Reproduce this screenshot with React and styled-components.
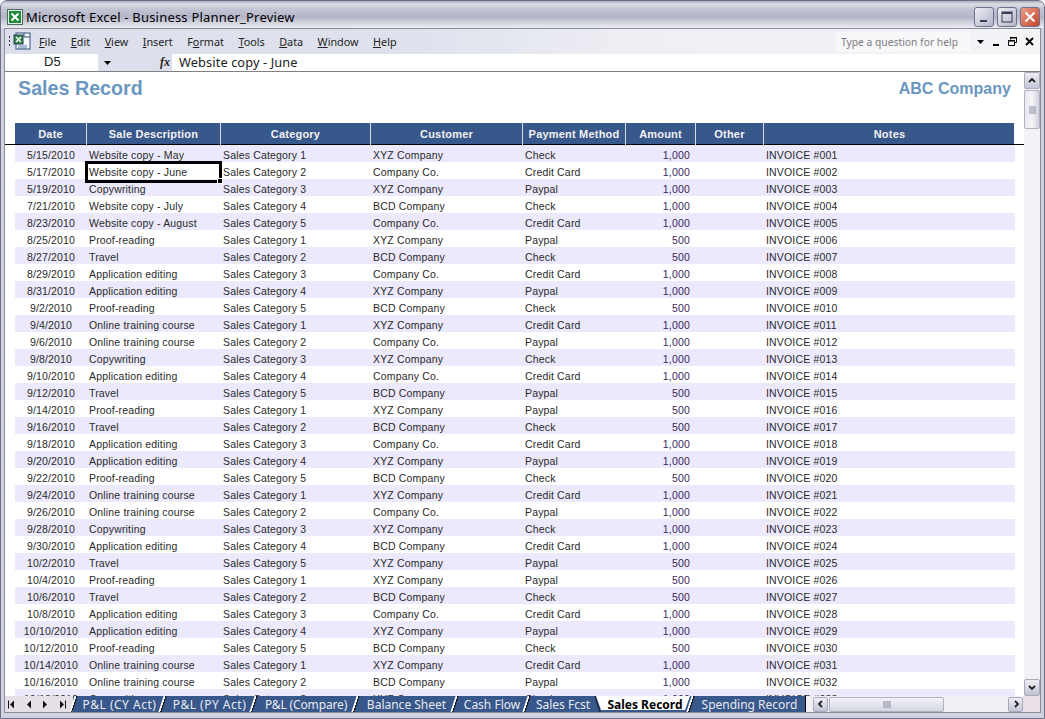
import React from "react";
import styled, { createGlobalStyle } from "styled-components";

const GlobalStyle = createGlobalStyle`
  html, body {
    margin: 0;
    padding: 0;
    background: #fff;
  }
  #root {
    width: 1045px;
    height: 719px;
  }
`;

const COLUMNS = "72px 134px 150px 152px 103px 70px 68px 251px";

const Window = styled.div`
  width: 1045px;
  height: 719px;
  box-sizing: border-box;
  display: flex;
  flex-direction: column;
  overflow: hidden;
  background: #d2d3e0;
  border: 1px solid #6f7088;
  border-radius: 7px 7px 0 0;
  font-family: "Liberation Sans", Arial, sans-serif;
`;

const TitleBar = styled.div`
  height: 27px;
  flex: none;
  box-sizing: border-box;
  display: flex;
  align-items: center;
  gap: 3px;
  padding: 4px 4px 0 6px;
  background: linear-gradient(#a9aabc 0, #dcdde6 3px, #c4c5d4 8px, #b3b4c7 16px, #d3d4df 22px, #ecedf2 100%);
`;

const AppTitle = styled.div`
  flex: 1;
  font-family: "Noto Sans", sans-serif;
  font-size: 13px;
  color: #000;
  white-space: nowrap;
  letter-spacing: 0.2px;
`;

const WinButton = styled.div`
  width: 20px;
  height: 20px;
  box-sizing: border-box;
  display: flex;
  align-items: center;
  justify-content: center;
  border: 1px solid #70728c;
  border-radius: 3px;
  background: ${({ $close }) =>
    $close
      ? "linear-gradient(135deg, #e8a08c, #c8432c)"
      : "linear-gradient(135deg, #eeeef4, #b4b5c8)"};
`;

const Inner = styled.div`
  flex: 1;
  min-height: 0;
  display: flex;
  flex-direction: column;
  margin: 0 3px 5px 3px;
  border: 1px solid #8c8d9c;
  background: #fff;
`;

const MenuRow = styled.div`
  height: 25px;
  flex: none;
  display: flex;
  align-items: center;
  background: linear-gradient(90deg, #dde0ec 0, #dfe2ed 40%, #eeeef4 60%, #f4f4f7 100%);
`;

const ExcelDoc = styled.div`
  width: 29px;
  flex: none;
  display: flex;
  padding-left: 3px;
`;

const MenuItems = styled.div`
  display: flex;
  flex: 1;
  gap: 14.5px;
  padding-left: 2px;
  font-family: "Noto Sans", sans-serif;
  font-size: 10.8px;
  color: #222;
`;

const MenuItem = styled.span`
  u {
    text-underline-offset: 1px;
  }
`;

const HelpBox = styled.div`
  width: 135px;
  height: 20px;
  display: flex;
  align-items: center;
  padding-left: 5px;
  box-sizing: border-box;
  background: #f8f8fa;
  font-family: "Noto Sans", sans-serif;
  font-size: 10.3px;
  color: #7c7c84;
`;

const DocControls = styled.div`
  display: flex;
  align-items: center;
  gap: 8px;
  padding: 0 6px 0 6px;
`;

const FormulaRow = styled.div`
  height: 17px;
  flex: none;
  display: flex;
  align-items: stretch;
  font-size: 13px;
  color: #222;
  border-bottom: 1px solid #808080;
`;

const NameBox = styled.div`
  width: 93px;
  flex: none;
  padding-left: 39px;
  box-sizing: border-box;
  background: #fff;
`;

const FxArea = styled.div`
  width: 74px;
  flex: none;
  display: flex;
  align-items: center;
  justify-content: space-between;
  padding: 0 2px 0 6px;
  box-sizing: border-box;
  background: #dde0ec;
`;

const FxLabel = styled.span`
  font-family: "Liberation Serif", serif;
  font-style: italic;
  font-weight: bold;
  font-size: 12px;
  color: #222;
`;

const FormulaText = styled.div`
  flex: 1;
  padding-left: 7px;
  font-family: "Noto Sans", sans-serif;
  font-size: 12.8px;
  line-height: 17px;
  letter-spacing: 0.1px;
`;

const SheetArea = styled.div`
  flex: 1;
  min-height: 0;
  display: flex;
`;

const Sheet = styled.div`
  flex: 1;
  min-width: 0;
  overflow: hidden;
  background: #fff;
`;

const Heading = styled.div`
  height: 47px;
  box-sizing: content-box;
  display: flex;
  justify-content: space-between;
  padding: 4px 13px 0 13px;
  font-weight: bold;
  color: #6b97c0;
`;

const SheetTitle = styled.div`
  font-size: 19.7px;
  line-height: 24px;
`;

const Company = styled.div`
  font-size: 16px;
  line-height: 26px;
  letter-spacing: 0.03px;
`;

const HeaderRow = styled.div`
  display: grid;
  grid-template-columns: ${COLUMNS};
  margin-left: 10px;
  width: 999px;
  height: 21px;
  background: #38578a;
`;

const HeaderCell = styled.div`
  font-size: 11px;
  font-weight: bold;
  line-height: 22px;
  text-align: center;
  color: #f2f2f2;
  letter-spacing: 0.2px;
  border-right: 1px solid #d8dde8;
  white-space: nowrap;
  &:last-child {
    border-right: 0;
  }
`;

const HeaderRule = styled.div`
  height: 1px;
  background: #000;
`;

const Row = styled.div`
  display: grid;
  grid-template-columns: ${COLUMNS};
  margin-left: 10px;
  width: 1000px;
  height: 17px;
  background: ${({ $shaded }) => ($shaded ? "#ebe9fb" : "#fff")};
`;

const Cell = styled.div`
  position: relative;
  box-sizing: border-box;
  padding: 0 6px 0 2px;
  font-size: 10.5px;
  line-height: 20px;
  letter-spacing: 0.17px;
  color: #2a2a2a;
  white-space: nowrap;
`;

const DateCell = styled(Cell)`
  padding: 0;
  text-align: center;
`;

const AmountCell = styled(Cell)`
  text-align: right;
  color: #3d1f5e;
`;

const Selection = styled.div`
  position: absolute;
  left: -2px;
  top: -1px;
  right: -1px;
  bottom: -1px;
  border: 3px solid #000;
  pointer-events: none;
`;

const FillHandle = styled.div`
  position: absolute;
  right: -4px;
  bottom: -4px;
  width: 6px;
  height: 6px;
  background: #000;
  border: 1px solid #fff;
  box-sizing: border-box;
`;

const VScroll = styled.div`
  width: 16px;
  flex: none;
  display: flex;
  flex-direction: column;
  background: #f3f3f7;
`;

const ScrollButton = styled.div`
  flex: none;
  width: ${({ $w }) => $w || 16}px;
  height: ${({ $h }) => $h || 16}px;
  box-sizing: border-box;
  display: flex;
  align-items: center;
  justify-content: center;
  border: 1px solid #a8a9bb;
  border-radius: 2px;
  background: linear-gradient(#eeeef4, #c4c5d4);
`;

const VThumb = styled.div`
  flex: none;
  height: 39px;
  margin-top: 1px;
  box-sizing: border-box;
  display: flex;
  align-items: center;
  justify-content: center;
  border: 1px solid #b0b1c2;
  border-radius: 2px;
  background: linear-gradient(90deg, #e8e8ef, #f4f4f8, #cfd0dc);
`;

const Spacer = styled.div`
  flex: 1;
`;

const BottomBar = styled.div`
  height: 16px;
  flex: none;
  display: flex;
  align-items: stretch;
  background: #38578a;
`;

const TabNav = styled.div`
  width: 68px;
  flex: none;
  display: flex;
  align-items: center;
  gap: 8.5px;
  padding-left: 3px;
  box-sizing: border-box;
  background: #e6e0e6;
`;

const Tabs = styled.div`
  display: flex;
  align-items: stretch;
  flex: none;
`;

const Tab = styled.div`
  position: relative;
  isolation: isolate;
  display: flex;
  align-items: center;
  justify-content: center;
  padding-left: 4px;
  box-sizing: border-box;
  font-family: "Noto Sans", sans-serif;
  font-size: 12px;
  font-weight: 400;
  letter-spacing: ${({ $spacing }) => $spacing || 0}px;
  color: #e8eaf2;
  width: ${({ $w }) => $w}px;
  white-space: nowrap;

  &::before {
    content: "";
    position: absolute;
    left: -1px;
    top: 0;
    bottom: 0;
    width: 3px;
    background: linear-gradient(90deg, #fff 60%, #111 60%);
    transform: skewX(-18deg);
  }
`;

const ActiveTab = styled(Tab)`
  font-weight: 700;
  color: #000;

  &::before {
    left: 1px;
    width: 1px;
    background: #111;
    transform: skewX(18deg);
  }

  &::after {
    content: "";
    position: absolute;
    inset: 0 0 2px 0;
    z-index: -1;
    background: #fff;
    clip-path: polygon(0 0, 100% 0, calc(100% - 5px) 100%, 5px 100%);
  }
`;

const HScroll = styled.div`
  flex: 1;
  display: flex;
  align-items: center;
  padding-left: 7px;
  background: #f0f0f5;
  border-left: 1px solid #000;
`;

const HThumb = styled.div`
  width: 115px;
  height: 15px;
  margin-left: 1px;
  display: flex;
  align-items: center;
  justify-content: center;
  box-sizing: border-box;
  border: 1px solid #b0b1c2;
  border-radius: 2px;
  background: linear-gradient(#f4f4f8, #d4d5e0);
`;

const ScrollCorner = styled.div`
  width: 17px;
  height: 100%;
  flex: none;
  background: #e8dfe8;
`;

const GripLines = styled.svg`
  display: block;
`;

const ExcelIcon = () => (
  <svg width="16" height="16" viewBox="0 0 16 16">
    <rect x="0.5" y="0.5" width="15" height="15" fill="#e8f2e6" stroke="#4a6a5c" />
    <rect x="2" y="2" width="12" height="12" fill="#1f8a3c" />
    <path d="M4.5 4.5 L11.5 11.5 M11.5 4.5 L4.5 11.5" stroke="#fff" strokeWidth="2" />
  </svg>
);

const MenuDocIcon = () => (
  <svg width="24" height="20" viewBox="0 0 24 20">
    <path d="M1 4h1v2H1zM1 8h1v2H1zM1 12h1v2H1z" fill="#333" />
    <rect x="8" y="1" width="14" height="16" fill="#f4f6fb" stroke="#30507a" />
    <path d="M16 1v4h6" fill="none" stroke="#30507a" />
    <rect x="6" y="3" width="9" height="9" fill="#2c8a40" stroke="#2a3a60" />
    <path d="M8 5l5 5M13 5l-5 5" stroke="#fff" strokeWidth="1.4" />
    <path d="M10 14h9M10 16h9" stroke="#5a82b4" />
  </svg>
);

const Caret = () => (
  <svg width="7" height="4" viewBox="0 0 7 4">
    <path d="M0 0h7L3.5 4z" fill="#000" />
  </svg>
);

const Chevron = ({ dir }) => {
  const paths = {
    up: "M1 5l3-3 3 3",
    down: "M1 2l3 3 3-3",
    left: "M5 1L2 4l3 3",
    right: "M3 1l3 3-3 3",
  };
  return (
    <svg width="8" height="8" viewBox="0 0 8 8">
      <path d={paths[dir]} fill="none" stroke="#222" strokeWidth="1.8" />
    </svg>
  );
};

const NavArrow = ({ dir, bar }) => (
  <svg width="8" height="9" viewBox="0 0 8 9">
    {dir === "left" ? <path d="M6 0.5v8L2 4.5z" fill="#111" /> : <path d="M2 0.5v8l4-4z" fill="#111" />}
    {bar && <rect x={dir === "left" ? 0 : 7} y="0.5" width="1" height="8" fill="#111" />}
  </svg>
);

const rows = [
  ["5/15/2010", "Website copy - May", 1, "XYZ Company", "Check", "1,000"],
  ["5/17/2010", "Website copy - June", 2, "Company Co.", "Credit Card", "1,000"],
  ["5/19/2010", "Copywriting", 3, "XYZ Company", "Paypal", "1,000"],
  ["7/21/2010", "Website copy - July", 4, "BCD Company", "Check", "1,000"],
  ["8/23/2010", "Website copy - August", 5, "Company Co.", "Credit Card", "1,000"],
  ["8/25/2010", "Proof-reading", 1, "XYZ Company", "Paypal", "500"],
  ["8/27/2010", "Travel", 2, "BCD Company", "Check", "500"],
  ["8/29/2010", "Application editing", 3, "Company Co.", "Credit Card", "1,000"],
  ["8/31/2010", "Application editing", 4, "XYZ Company", "Paypal", "1,000"],
  ["9/2/2010", "Proof-reading", 5, "BCD Company", "Check", "500"],
  ["9/4/2010", "Online training course", 1, "XYZ Company", "Credit Card", "1,000"],
  ["9/6/2010", "Online training course", 2, "Company Co.", "Paypal", "1,000"],
  ["9/8/2010", "Copywriting", 3, "XYZ Company", "Check", "1,000"],
  ["9/10/2010", "Application editing", 4, "Company Co.", "Credit Card", "1,000"],
  ["9/12/2010", "Travel", 5, "BCD Company", "Paypal", "500"],
  ["9/14/2010", "Proof-reading", 1, "XYZ Company", "Paypal", "500"],
  ["9/16/2010", "Travel", 2, "BCD Company", "Check", "500"],
  ["9/18/2010", "Application editing", 3, "Company Co.", "Credit Card", "1,000"],
  ["9/20/2010", "Application editing", 4, "XYZ Company", "Paypal", "1,000"],
  ["9/22/2010", "Proof-reading", 5, "BCD Company", "Check", "500"],
  ["9/24/2010", "Online training course", 1, "XYZ Company", "Credit Card", "1,000"],
  ["9/26/2010", "Online training course", 2, "Company Co.", "Paypal", "1,000"],
  ["9/28/2010", "Copywriting", 3, "XYZ Company", "Check", "1,000"],
  ["9/30/2010", "Application editing", 4, "BCD Company", "Credit Card", "1,000"],
  ["10/2/2010", "Travel", 5, "XYZ Company", "Paypal", "500"],
  ["10/4/2010", "Proof-reading", 1, "XYZ Company", "Paypal", "500"],
  ["10/6/2010", "Travel", 2, "BCD Company", "Check", "500"],
  ["10/8/2010", "Application editing", 3, "Company Co.", "Credit Card", "1,000"],
  ["10/10/2010", "Application editing", 4, "XYZ Company", "Paypal", "1,000"],
  ["10/12/2010", "Proof-reading", 5, "BCD Company", "Check", "500"],
  ["10/14/2010", "Online training course", 1, "XYZ Company", "Credit Card", "1,000"],
  ["10/16/2010", "Online training course", 2, "BCD Company", "Paypal", "1,000"],
  ["10/18/2010", "Copywriting", 3, "XYZ Company", "Check", "1,000"],
];

const headers = ["Date", "Sale Description", "Category", "Customer", "Payment Method", "Amount", "Other", "Notes"];

const menus = [
  ["F", "ile"],
  ["E", "dit"],
  ["V", "iew"],
  ["I", "nsert"],
  ["Fo", "rmat", 1],
  ["T", "ools"],
  ["D", "ata"],
  ["W", "indow"],
  ["H", "elp"],
];

const tabs = [
  ["P&L (CY Act)", 89, 0.5],
  ["P&L (PY Act)", 91, 0.5],
  ["P&L (Compare)", 102, -0.15],
  ["Balance Sheet", 99],
  ["Cash Flow", 72],
  ["Sales Fcst", 70],
  ["Sales Record", 94],
  ["Spending Record", 115],
];

const App = () => (
  <>
    <GlobalStyle />
    <Window>
      <TitleBar>
        <ExcelIcon />
        <AppTitle>Microsoft Excel - Business Planner_Preview</AppTitle>
        <WinButton>
          <svg width="10" height="12" viewBox="0 0 10 12"><rect x="1" y="9" width="7" height="2" fill="#3a3c58" /></svg>
        </WinButton>
        <WinButton>
          <svg width="12" height="12" viewBox="0 0 12 12"><rect x="1" y="1" width="10" height="10" fill="none" stroke="#3a3c58" /><rect x="1" y="1" width="10" height="2" fill="#3a3c58" /></svg>
        </WinButton>
        <WinButton $close>
          <svg width="12" height="12" viewBox="0 0 12 12"><path d="M1.5 1.5l9 9M10.5 1.5l-9 9" stroke="#fff" strokeWidth="2" /></svg>
        </WinButton>
      </TitleBar>
      <Inner>
        <MenuRow>
          <ExcelDoc><MenuDocIcon /></ExcelDoc>
          <MenuItems>
            {menus.map(([a, b, under]) => (
              <MenuItem key={a + b}>
                {under ? <>F<u>o</u>{b}</> : <><u>{a}</u>{b}</>}
              </MenuItem>
            ))}
          </MenuItems>
          <HelpBox>Type a question for help</HelpBox>
          <DocControls>
            <Caret />
            <svg width="8" height="8" viewBox="0 0 8 8"><rect x="1" y="6" width="6" height="2" fill="#000" /></svg>
            <svg width="9" height="9" viewBox="0 0 9 9"><path d="M2.5 2.5V.5h6v5h-2M.5 3.5h6v5h-6z" fill="none" stroke="#000" /><path d="M2 0h7v1.5H2zM0 3h7v1.5H0z" fill="#000" /></svg>
            <svg width="9" height="9" viewBox="0 0 9 9"><path d="M1 1l7 7M8 1l-7 7" stroke="#000" strokeWidth="1.8" /></svg>
          </DocControls>
        </MenuRow>
        <FormulaRow>
          <NameBox>D5</NameBox>
          <FxArea>
            <Caret />
            <FxLabel>fx</FxLabel>
          </FxArea>
          <FormulaText>Website copy - June</FormulaText>
        </FormulaRow>
        <SheetArea>
          <Sheet>
            <Heading>
              <SheetTitle>Sales Record</SheetTitle>
              <Company>ABC Company</Company>
            </Heading>
            <HeaderRow>
              {headers.map((h) => <HeaderCell key={h}>{h}</HeaderCell>)}
            </HeaderRow>
            <HeaderRule />
            {rows.map((r, i) => (
              <Row key={r[0]} $shaded={i % 2 === 0}>
                <DateCell>{r[0]}</DateCell>
                <Cell>
                  {r[1]}
                  {i === 1 && <Selection><FillHandle /></Selection>}
                </Cell>
                <Cell>Sales Category {r[2]}</Cell>
                <Cell>{r[3]}</Cell>
                <Cell>{r[4]}</Cell>
                <AmountCell>{r[5]}</AmountCell>
                <Cell />
                <Cell>INVOICE #{String(i + 1).padStart(3, "0")}</Cell>
              </Row>
            ))}
          </Sheet>
          <VScroll>
            <ScrollButton $h={17}><Chevron dir="up" /></ScrollButton>
            <VThumb>
              <GripLines width="7" height="8" viewBox="0 0 7 8"><path d="M0 1h7M0 3h7M0 5h7M0 7h7" stroke="#8c8da0" /></GripLines>
            </VThumb>
            <Spacer />
            <ScrollButton $h={17}><Chevron dir="down" /></ScrollButton>
          </VScroll>
        </SheetArea>
        <BottomBar>
          <TabNav>
            <NavArrow dir="left" bar />
            <NavArrow dir="left" />
            <NavArrow dir="right" />
            <NavArrow dir="right" bar />
          </TabNav>
          <Tabs>
            {tabs.map(([label, w, spacing]) =>
              label === "Sales Record" ? (
                <ActiveTab key={label} $w={w}>{label}</ActiveTab>
              ) : (
                <Tab key={label} $w={w} $spacing={spacing}>{label}</Tab>
              )
            )}
          </Tabs>
          <HScroll>
            <ScrollButton $w={15} $h={15}><Chevron dir="left" /></ScrollButton>
            <HThumb>
              <GripLines width="8" height="7" viewBox="0 0 8 7"><path d="M1 0v7M3 0v7M5 0v7M7 0v7" stroke="#8c8da0" /></GripLines>
            </HThumb>
            <Spacer />
            <ScrollButton $w={15} $h={15}><Chevron dir="right" /></ScrollButton>
            <ScrollCorner />
          </HScroll>
        </BottomBar>
      </Inner>
    </Window>
  </>
);

export default App;
